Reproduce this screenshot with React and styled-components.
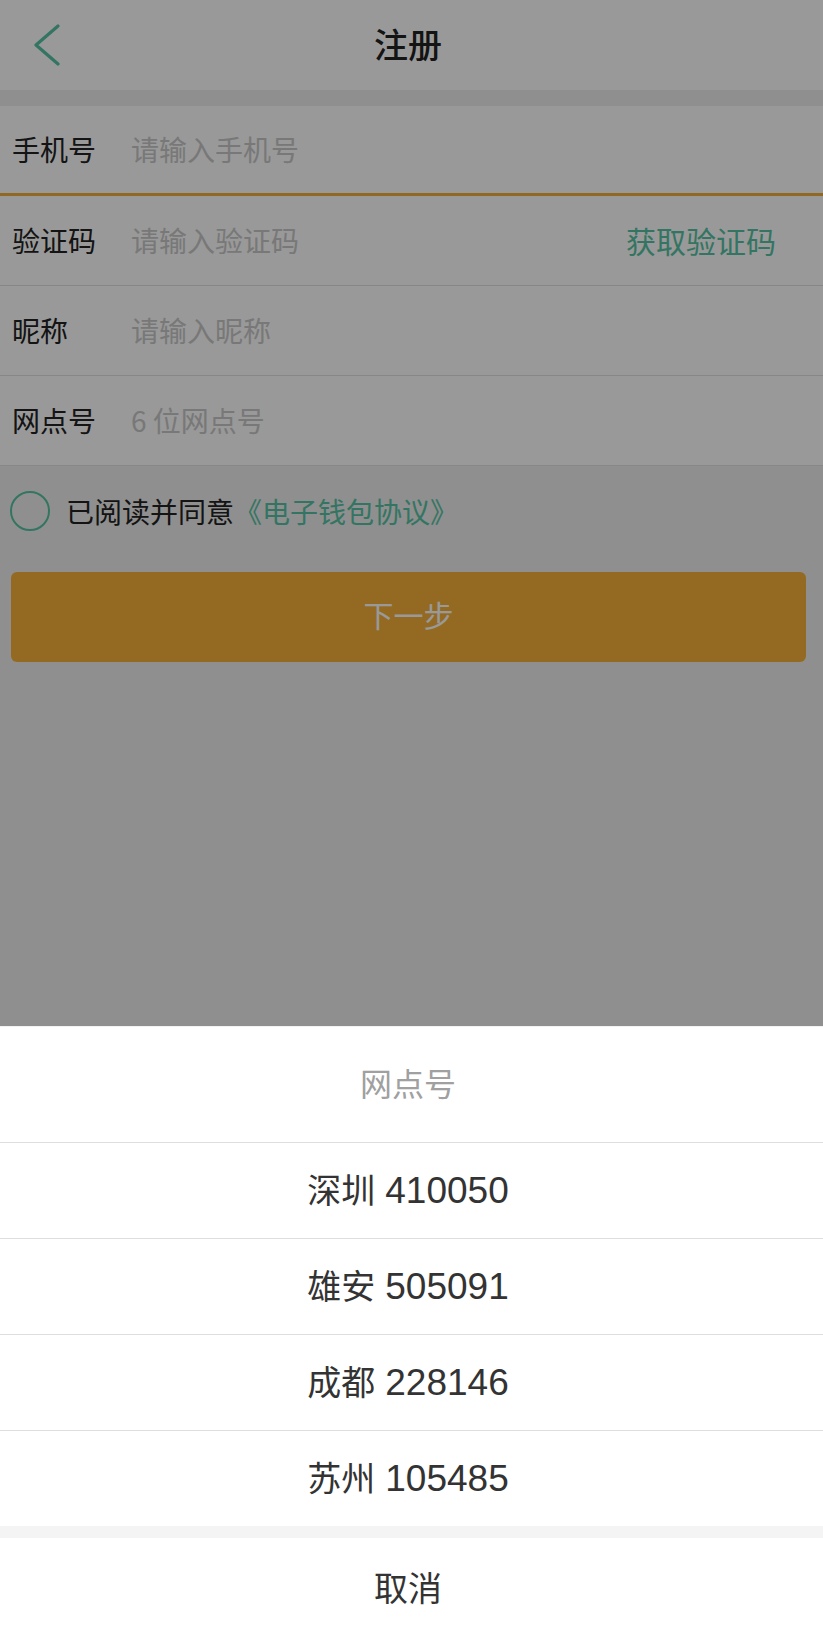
import React from 'react'
import styled, { createGlobalStyle } from 'styled-components';

const GlobalStyle = createGlobalStyle`
html, body {
  margin: 0;
  padding: 0;
  background: #eeeeee;
}
body {
  font-family: "Noto Sans CJK SC", "Noto Sans", sans-serif;
}
`

const Page = styled.div`
min-height: 1638px;
background: #eeeeee;
display: flex;
flex-direction: column;
`
const Header = styled.div`
height: 90px;
background: #fff;
display: flex;
align-items: center;
justify-content: center;
position: relative;
padding: 0 7px 4px 0;
box-sizing: border-box;
`
const Back = styled.button`
position: absolute;
left: 30px;
top: 22px;
width: 34px;
height: 46px;
border: none;
background: none;
padding: 0;
display: flex;
align-items: center;
justify-content: center;
`
const Title = styled.h1`
margin: 0;
font-size: 34px;
font-weight: 500;
color: #222;
`
const Form = styled.div`
margin-top: 16px;
background: #fff;
display: flex;
flex-direction: column;
`
const Row = styled.div`
height: ${({ focused }) => (focused ? '87px' : '89px')};
display: flex;
align-items: center;
padding: 0 47px 0 12px;
border-bottom: ${({ focused }) => (focused ? '3px solid #f0ad3a' : '1px solid #e2e2e2')};
`
const Label = styled.span`
width: 119px;
font-size: 28px;
color: #222;
margin-bottom: 2px;
`
const Input = styled.span`
flex: 1;
font-size: 28px;
color: #c9c9c9;
margin-bottom: 2px;
`
const CodeLink = styled.span`
font-size: 30px;
color: #56c4a3;
margin-bottom: 2px;
`
const Agree = styled.div`
height: 90px;
display: flex;
align-items: center;
padding-left: 10px;
gap: 16px;
font-size: 28px;
color: #222;
`
const Circle = styled.span`
width: 36px;
height: 36px;
border: 2.5px solid #56c4a3;
border-radius: 50%;
`
const Link = styled.span`
color: #56c4a3;
`
const NextButton = styled.button`
margin: 16px 17px 0 11px;
height: 90px;
border: none;
border-radius: 6px;
background: #f7b139;
color: #ffffff;
font-family: inherit;
font-size: 30px;
display: flex;
align-items: center;
justify-content: center;
padding: 0 0 6px;
`
const Mask = styled.div`
position: fixed;
inset: 0;
background: rgba(0, 0, 0, 0.4);
`
const Sheet = styled.div`
position: fixed;
left: 0;
right: 0;
bottom: 0;
background: #f4f4f4;
display: flex;
flex-direction: column;
`
const SheetTitle = styled.div`
height: 116px;
background: #fff;
display: flex;
align-items: center;
justify-content: center;
padding: 0 7px 6px 0;
box-sizing: border-box;
font-size: 32px;
color: #a0a0a0;
border-top: 1px solid #f2f2f2;
`
const Option = styled.div`
height: 96px;
background: #fff;
border-top: 1px solid #dedede;
display: flex;
align-items: center;
justify-content: center;
padding: 0 7px 4px 0;
box-sizing: border-box;
font-size: 34px;
color: #333;
`
const Code = styled.span`
font-family: "Liberation Sans", "Noto Sans", sans-serif;
font-size: 37px;
margin-left: 10px;
`
const Cancel = styled(Option)`
margin-top: 12px;
height: 100px;
border-top: none;
`

const fields = [
    { label: '手机号', placeholder: '请输入手机号', focused: true },
    { label: '验证码', placeholder: '请输入验证码', code: true },
    { label: '昵称', placeholder: '请输入昵称' },
    { label: '网点号', placeholder: '6 位网点号' },
]

const branches = [
    { city: '深圳', code: '410050' },
    { city: '雄安', code: '505091' },
    { city: '成都', code: '228146' },
    { city: '苏州', code: '105485' },
]

const App = () => {
    return (
        <>
            <GlobalStyle />
            <Page>
                <Header>
                    <Back>
                        <svg width="28" height="42" viewBox="0 0 28 42" fill="none">
                            <path d="M25 2 L3 21 L25 40" stroke="#56c4a3" strokeWidth="3.2" strokeLinecap="round" strokeLinejoin="round" />
                        </svg>
                    </Back>
                    <Title>注册</Title>
                </Header>
                <Form>
                    {fields.map((f) => (
                        <Row key={f.label} focused={f.focused}>
                            <Label>{f.label}</Label>
                            <Input>{f.placeholder}</Input>
                            {f.code && <CodeLink>获取验证码</CodeLink>}
                        </Row>
                    ))}
                </Form>
                <Agree>
                    <Circle />
                    <span>已阅读并同意<Link>《电子钱包协议》</Link></span>
                </Agree>
                <NextButton>下一步</NextButton>
            </Page>
            <Mask />
            <Sheet>
                <SheetTitle>网点号</SheetTitle>
                {branches.map((b) => (
                    <Option key={b.code}>
                        <span>{b.city}<Code>{b.code}</Code></span>
                    </Option>
                ))}
                <Cancel>取消</Cancel>
            </Sheet>
        </>
    )
}

export default App
